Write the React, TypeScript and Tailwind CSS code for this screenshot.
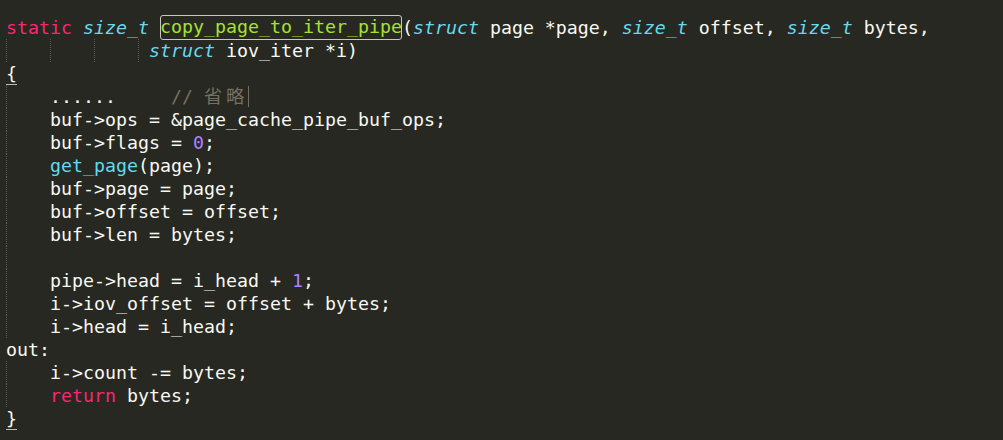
import React from "react";

type Kind = "kw" | "ty" | "fc" | "num" | "cm" | "txt" | "box" | "brace" | "cjk";
type Token = [string, Kind];

interface Line {
    guides: number[]; // widths in columns, each cell starts with a dotted guide
    tokens: Token[];
    cursor?: boolean;
}

const kindClass: Record<Kind, string> = {
    kw: "text-[#f92672]",
    ty: "text-[#66d9ef] italic",
    fc: "text-[#66d9ef]",
    num: "text-[#ae81ff]",
    cm: "text-[#75715e]",
    txt: "text-[#f8f8f2]",
    box: "inline-block h-[25px] -mt-px align-top text-[#a6e22e] rounded-[3px] outline outline-1 -outline-offset-1 outline-[#c8c8c0]",
    brace: "inline-block h-[23px] align-top text-[#f8f8f2] border-b border-[#bcbcb4]",
    cjk: "text-[#75715e] tracking-[3.73px]",
};

const colWidth: Record<number, string> = {
    1: "w-[11px]",
    4: "w-[44px]",
};

const lines: Line[] = [
    {
        guides: [],
        tokens: [
            ["static", "kw"],
            [" ", "txt"],
            ["size_t", "ty"],
            [" ", "txt"],
            ["copy_page_to_iter_pipe", "box"],
            ["(", "txt"],
            ["struct", "ty"],
            [" page *page, ", "txt"],
            ["size_t", "ty"],
            [" offset, ", "txt"],
            ["size_t", "ty"],
            [" bytes,", "txt"],
        ],
    },
    {
        guides: [4, 4, 4, 1],
        tokens: [
            ["struct", "ty"],
            [" iov_iter *i)", "txt"],
        ],
    },
    { guides: [], tokens: [["{", "brace"]] },
    {
        guides: [4],
        tokens: [
            ["......     ", "txt"],
            ["// ", "cm"],
            ["省略", "cjk"],
        ],
        cursor: true,
    },
    { guides: [4], tokens: [["buf->ops = &page_cache_pipe_buf_ops;", "txt"]] },
    {
        guides: [4],
        tokens: [
            ["buf->flags = ", "txt"],
            ["0", "num"],
            [";", "txt"],
        ],
    },
    {
        guides: [4],
        tokens: [
            ["get_page", "fc"],
            ["(page);", "txt"],
        ],
    },
    { guides: [4], tokens: [["buf->page = page;", "txt"]] },
    { guides: [4], tokens: [["buf->offset = offset;", "txt"]] },
    { guides: [4], tokens: [["buf->len = bytes;", "txt"]] },
    { guides: [4], tokens: [] },
    {
        guides: [4],
        tokens: [
            ["pipe->head = i_head + ", "txt"],
            ["1", "num"],
            [";", "txt"],
        ],
    },
    { guides: [4], tokens: [["i->iov_offset = offset + bytes;", "txt"]] },
    { guides: [4], tokens: [["i->head = i_head;", "txt"]] },
    { guides: [], tokens: [["out:", "txt"]] },
    { guides: [4], tokens: [["i->count -= bytes;", "txt"]] },
    {
        guides: [4],
        tokens: [
            ["return", "kw"],
            [" bytes;", "txt"],
        ],
    },
    { guides: [], tokens: [["}", "brace"]] },
];

function CodeLine({ line }: { line: Line }) {
    return (
        <div className="flex h-[23px] items-stretch whitespace-pre">
            {line.guides.map((cols, i) => (
                <span
                    key={i}
                    className={`${colWidth[cols]} shrink-0 border-l border-dotted border-[#5c5c55]`}
                />
            ))}
            <span>
                {line.tokens.map(([text, kind], i) => (
                    <span key={i} className={kindClass[kind]}>
                        {text}
                    </span>
                ))}
                {line.cursor && (
                    <span className="inline-block w-px h-[21px] align-[-4px] bg-[#6e6e66]" />
                )}
            </span>
        </div>
    );
}

export default function App() {
    return (
        <div
            className="w-[1003px] h-[440px] overflow-hidden bg-[#272822] pt-[16px] pl-[6px] text-[18.27px] leading-[23px] text-[#f8f8f2]"
            style={{ fontFamily: '"DejaVu Sans Mono", "Noto Sans CJK SC", monospace' }}
        >
            {lines.map((line, i) => (
                <CodeLine key={i} line={line} />
            ))}
        </div>
    );
}
